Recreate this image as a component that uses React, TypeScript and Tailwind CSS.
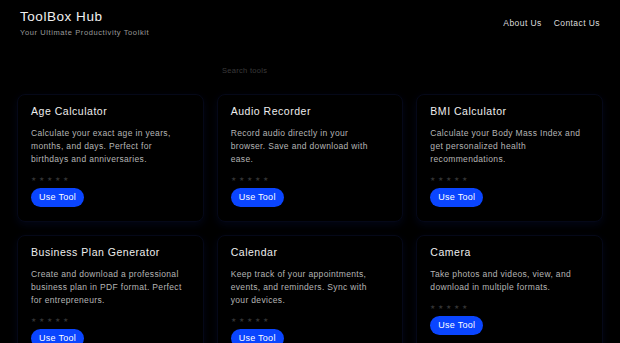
import React from 'react';

interface Tool {
    name: string;
    description: string;
}

const tools: Tool[] = [
    { name: 'Age Calculator', description: 'Calculate your exact age in years, months, and days. Perfect for birthdays and anniversaries.' },
    { name: 'Audio Recorder', description: 'Record audio directly in your browser. Save and download with ease.' },
    { name: 'BMI Calculator', description: 'Calculate your Body Mass Index and get personalized health recommendations.' },
    { name: 'Business Plan Generator', description: 'Create and download a professional business plan in PDF format. Perfect for entrepreneurs.' },
    { name: 'Calendar', description: 'Keep track of your appointments, events, and reminders. Sync with your devices.' },
    { name: 'Camera', description: 'Take photos and videos, view, and download in multiple formats.' },
];

const ToolCard = ({ tool }: { tool: Tool }) => (
    <div className="flex flex-col items-start rounded-lg border border-[#050818] bg-black px-[13px] pt-[8px] pb-[14px] shadow-[0_3px_8px_rgba(15,30,110,0.2)]">
        <h3 className="text-[10.5px] leading-4 tracking-[0.05em] text-[#eeeeee]">{tool.name}</h3>
        <p className="mt-[8px] pr-[4px] text-[8.5px] leading-[13px] tracking-[0.04em] text-[#b5b5b5]">{tool.description}</p>
        <div className="mt-[10px] flex gap-[3px] text-[6px] leading-none text-[#333333]">
            {[0, 1, 2, 3, 4].map(i => <span key={i}>★</span>)}
        </div>
        <button className="mt-[6px] h-[19px] rounded-full bg-[#0a45ff] px-[8px] text-[9px] tracking-[0.03em] text-white">
            Use Tool
        </button>
    </div>
);

export default function App() {
    return (
        <div className="min-h-[343px] w-full overflow-hidden bg-black font-['Liberation_Sans',sans-serif] text-white">
            {/* Header */}
            <header className="flex items-start justify-between px-5 pt-[8px]">
                <div>
                    <h1 className="text-[13.5px] leading-[18px] tracking-[0.04em] text-[#f0f0f0]">ToolBox Hub</h1>
                    <p className="mt-[1px] text-[7.5px] tracking-[0.08em] text-[#9a9a9a]">Your Ultimate Productivity Toolkit</p>
                </div>
                <nav className="mt-[9px] flex gap-3 text-[8.5px] tracking-[0.05em] text-[#dddddd]">
                    <a href="#">About Us</a>
                    <a href="#">Contact Us</a>
                </nav>
            </header>

            {/* Search */}
            <div className="mt-[18px] pl-[222px]">
                <input
                    type="text"
                    placeholder="Search tools"
                    className="w-[160px] bg-transparent text-[7.5px] tracking-[0.04em] text-[#444] placeholder:text-[#3a3a3a] outline-none"
                />
            </div>

            {/* Tools grid */}
            <main className="mt-[14px] grid grid-cols-3 gap-[13px] px-[17px]">
                {tools.map(t => <ToolCard key={t.name} tool={t} />)}
            </main>
        </div>
    );
}
